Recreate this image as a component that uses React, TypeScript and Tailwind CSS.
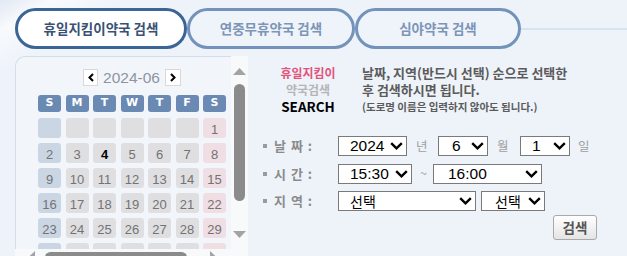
import type { ReactNode } from 'react'

const WEEKS: (number | null)[][] = [
  [null, null, null, null, null, null, 1],
  [2, 3, 4, 5, 6, 7, 8],
  [9, 10, 11, 12, 13, 14, 15],
  [16, 17, 18, 19, 20, 21, 22],
  [23, 24, 25, 26, 27, 28, 29],
  [30, null, null, null, null, null, null],
]

const DAY_NAMES = ['S', 'M', 'T', 'W', 'T', 'F', 'S']
const TODAY = 4

function cellBg(col: number) {
  if (col === 0) return 'bg-[#cbd6e5]'
  if (col === 6) return 'bg-[#efdee3]'
  return 'bg-[#dfdfe2]'
}

function Chevron({ dir }: { dir: 'left' | 'right' }) {
  return (
    <svg width="6" height="9" viewBox="0 0 6 9" className="block">
      <polyline
        points={dir === 'left' ? '5,1 1.5,4.5 5,8' : '1,1 4.5,4.5 1,8'}
        fill="none"
        stroke="#000"
        strokeWidth="2"
      />
    </svg>
  )
}

function Calendar() {
  return (
    <div className="w-[216px] h-full overflow-hidden border-l border-t border-[#d3deeb] rounded-tl-[10px] bg-[#f2f6fb] pl-[22px] pt-[12px]">
      <div className="w-[188px] h-[17px] flex items-center justify-center gap-[5px]">
        <button className="w-[15px] h-[17px] bg-white border border-[#d9d9d9] flex items-center justify-center">
          <Chevron dir="left" />
        </button>
        <span className="font-['Liberation_Sans',sans-serif] text-[15.5px] leading-none text-[#8d95a2]">
          2024-06
        </span>
        <button className="w-[16px] h-[17px] bg-white border border-[#d9d9d9] flex items-center justify-center">
          <Chevron dir="right" />
        </button>
      </div>

      <div className="mt-[9px] grid grid-cols-[repeat(7,23px)] gap-x-[4.5px]">
        {DAY_NAMES.map((d, i) => (
          <div
            key={i}
            className="h-[17px] rounded-[3px] bg-[#6a8ab4] text-white font-bold text-[11px] font-['DejaVu_Sans',sans-serif] flex items-center justify-center"
          >
            {d}
          </div>
        ))}
      </div>

      <div className="mt-[6px] grid grid-cols-[repeat(7,23px)] gap-x-[4.5px] gap-y-[5px]">
        {WEEKS.flatMap((week, r) =>
          week.map((day, c) => (
            <div
              key={`${r}-${c}`}
              className={`h-[20px] rounded-[3px] pt-[3px] leading-[17px] text-center font-['Liberation_Sans',sans-serif] text-[13px] ${cellBg(c)} ${
                day === TODAY ? 'font-bold text-black' : 'text-[#737373]'
              }`}
            >
              {r < 5 ? day ?? '' : ''}
            </div>
          )),
        )}
      </div>
    </div>
  )
}

function VScroll() {
  return (
    <div className="w-[17px] h-full bg-[#f8f9fb] flex flex-col items-center">
      <svg width="13" height="7" viewBox="0 0 13 7" className="mt-[12px] block">
        <polygon points="6.5,0 13,7 0,7" fill="#a3a3a3" />
      </svg>
      <div className="mt-[9px] w-[11px] h-[117px] rounded-full bg-[#8b8b8b]" />
      <div className="flex-1" />
      <svg width="13" height="7" viewBox="0 0 13 7" className="mb-[11px] block">
        <polygon points="0,0 13,0 6.5,7" fill="#a3a3a3" />
      </svg>
    </div>
  )
}

function HScroll() {
  return (
    <div className="h-[17px] bg-[#f8f9fb] flex items-center">
      <svg width="7" height="13" viewBox="0 0 7 13" className="ml-[13px] block">
        <polygon points="7,0 7,13 0,6.5" fill="#a3a3a3" />
      </svg>
      <div className="ml-[10px] w-[142px] h-[11px] rounded-full bg-[#8b8b8b]" />
      <svg width="7" height="13" viewBox="0 0 7 13" className="ml-[23px] block">
        <polygon points="0,0 7,6.5 0,13" fill="#a3a3a3" />
      </svg>
    </div>
  )
}

function FakeSelect({
  value,
  width,
  pl,
  hangul = false,
}: {
  value: string
  width: number
  pl: number
  hangul?: boolean
}) {
  return (
    <div
      role="combobox"
      aria-expanded={false}
      className="relative h-[20px] border border-[#7a7a7a] bg-white flex items-center"
      style={{ width }}
    >
      <span
        className={`leading-none text-black ${
          hangul
            ? "font-['Noto_Sans_CJK_KR',sans-serif] text-[14px]"
            : "font-['Liberation_Sans',sans-serif] text-[15.5px]"
        }`}
        style={{ paddingLeft: pl }}
      >
        {value}
      </span>
      <svg
        width="13"
        height="8"
        viewBox="0 0 13 8"
        className="absolute right-[3px] top-[5px] pointer-events-none"
      >
        <polyline points="1.2,1.2 6.5,6.3 11.8,1.2" fill="none" stroke="#000" strokeWidth="2.4" />
      </svg>
    </div>
  )
}

function Label({ children }: { children: ReactNode }) {
  return (
    <div className="w-[75px] flex items-center">
      <span className="w-[4px] h-[4px] bg-[#9a9a9a]" />
      <span className="ml-[7px] whitespace-pre text-[13px] font-bold tracking-[1px] text-[#8b8b8b]">
        {children}
      </span>
    </div>
  )
}

function Unit({ children, w, pl }: { children: ReactNode; w?: number; pl: number }) {
  return (
    <span className="text-[12.5px] text-[#a0a0a0]" style={{ width: w, paddingLeft: pl }}>
      {children}
    </span>
  )
}

function SearchForm() {
  return (
    <div className="pl-[15px] pt-[8px]">
      <div className="flex">
        <div className="w-[90px] flex flex-col items-center leading-[17px]">
          <span className="text-[12px] font-bold text-[#e3527a]">휴일지킴이</span>
          <span className="text-[12px] font-bold text-[#b5b5b5]">약국검색</span>
          <span className="text-[13.5px] font-bold text-black">SEARCH</span>
        </div>
        <div className="ml-[9px] flex flex-col leading-[17px] font-bold text-[#5b5b5b]">
          <span className="text-[13px]">날짜, 지역(반드시 선택) 순으로 선택한</span>
          <span className="text-[13px]">후 검색하시면 됩니다.</span>
          <span className="text-[10.5px]">(도로명 이름은 입력하지 않아도 됩니다.)</span>
        </div>
      </div>

      <div className="mt-[21px] flex flex-col gap-[7.5px]">
        <div className="flex items-center h-[20px]">
          <Label>날 짜 :</Label>
          <FakeSelect value="2024" width={69} pl={11} />
          <Unit w={31} pl={9}>년</Unit>
          <FakeSelect value="6" width={50} pl={13} />
          <Unit w={32} pl={9}>월</Unit>
          <FakeSelect value="1" width={50} pl={11} />
          <Unit pl={8}>일</Unit>
        </div>
        <div className="flex items-center h-[20px]">
          <Label>시 간 :</Label>
          <FakeSelect value="15:30" width={74} pl={11} />
          <Unit w={21} pl={8}>~</Unit>
          <FakeSelect value="16:00" width={109} pl={14} />
        </div>
        <div className="flex items-center h-[20px]">
          <Label>지 역 :</Label>
          <FakeSelect value="선택" width={138} pl={11} hangul />
          <div className="w-[5px]" />
          <FakeSelect value="선택" width={64} pl={13} hangul />
        </div>
      </div>

      <button className="mt-[4px] ml-[290px] w-[44px] h-[25px] rounded-[3px] border border-[#a9a9a9] bg-[linear-gradient(#ffffff,#e4e4e4)] text-[13.5px] font-bold text-[#555]">
        검색
      </button>
    </div>
  )
}

const TABS = [
  { label: '휴일지킴이약국 검색', width: 172, active: true },
  { label: '연중무휴약국 검색', width: 168, active: false },
  { label: '심야약국 검색', width: 166, active: false },
]

export default function App() {
  return (
    <div className="w-[627px] h-[256px] overflow-hidden bg-[#eef3fa] bg-[linear-gradient(150deg,#e2e9f3_0%,#f8fafd_5%,#eef3fa_12%)] font-['Noto_Sans_CJK_KR',sans-serif]">
      <div className="flex items-center pt-[8px] pl-[15px]">
        {TABS.map((t) => (
          <div
            key={t.label}
            style={{ width: t.width }}
            className={`h-[41px] rounded-full border-[3px] flex items-center justify-center text-[13.5px] font-bold ${
              t.active
                ? 'border-[#3c6597] bg-white text-[#3b5174]'
                : 'border-[#7393bb] bg-[#eff4fb] text-[#7d95b6]'
            }`}
          >
            {t.label}
          </div>
        ))}
        <div className="flex-1 h-[2px] bg-[#d9e3ef]" />
      </div>

      <div className="mt-[7px] flex">
        <div className="ml-[15px] w-[233px] flex flex-col">
          <div className="h-[193px] flex">
            <Calendar />
            <VScroll />
          </div>
          <HScroll />
        </div>
        <SearchForm />
      </div>
    </div>
  )
}
